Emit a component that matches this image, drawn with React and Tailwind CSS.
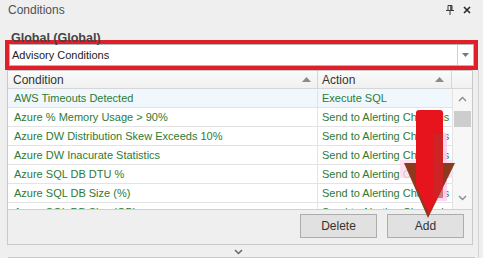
import React from "react";

const rows = [
  ["AWS Timeouts Detected", "Execute SQL"],
  ["Azure % Memory Usage > 90%", "Send to Alerting Channels"],
  ["Azure DW Distribution Skew Exceeds 10%", "Send to Alerting Channels"],
  ["Azure DW Inacurate Statistics", "Send to Alerting Channels"],
  ["Azure SQL DB DTU %", "Send to Alerting Channels"],
  ["Azure SQL DB Size (%)", "Send to Alerting Channels"],
  ["Azure SQL DB Size (GB)", "Send to Alerting Channels"],
];

function SortUp() {
  return (
    <svg width="9" height="5" viewBox="0 0 9 5">
      <path d="M0 5 L4.5 0 L9 5 Z" fill="#8a8a8a" />
    </svg>
  );
}

export default function App() {
  return (
    <div
      className="relative w-[483px] h-[258px] overflow-hidden bg-[#efefef] text-[#333]"
      style={{ fontFamily: '"Liberation Sans", Arial, sans-serif' }}
    >
      {/* title bar */}
      <div className="h-[19px] flex items-center justify-between pl-[8px] pr-[12px]">
        <span className="text-[12px] leading-[14px] text-[#505050]">Conditions</span>
        <div className="flex items-center gap-[9px]">
          <svg width="8" height="10" viewBox="0 0 8 10">
            <path d="M2 0.5 H6 V5 M2 0.5 V5" stroke="#3a3a3a" strokeWidth="1" fill="none" />
            <path d="M5 0.5 V5" stroke="#3a3a3a" strokeWidth="1.5" />
            <path d="M0 5.5 H8" stroke="#3a3a3a" strokeWidth="1" />
            <path d="M4 5.5 V10" stroke="#3a3a3a" strokeWidth="1" />
          </svg>
          <svg width="8" height="8" viewBox="0 0 8 8">
            <path d="M1 1 L7 7 M7 1 L1 7" stroke="#2a2a2a" strokeWidth="1.6" />
          </svg>
        </div>
      </div>

      {/* heading */}
      <div className="h-[21px] pl-[11px] pt-[6px]">
        <span className="text-[12.5px] leading-[15px] font-bold text-[#444]">Global (Global)</span>
      </div>

      {/* red highlighted dropdown */}
      <div className="ml-[5px] w-[473px] h-[30px] border-4 border-[#e11f2b] bg-white">
        <div className="flex h-full border border-[#b5b5b5]">
          <div className="flex-1 flex items-center pl-[2px] text-[11px] text-[#222]">
            Advisory Conditions
          </div>
          <div className="w-[16px] border-l border-[#cfcfcf] flex items-center justify-center">
            <svg width="7" height="4" viewBox="0 0 7 4">
              <path d="M0 0 H7 L3.5 4 Z" fill="#777" />
            </svg>
          </div>
        </div>
      </div>

      {/* lower section */}
      <div className="w-[479px] h-[188px] border-r border-[#d2d2d2]">
        <div className="ml-[7px] w-[466px] h-[175px] border border-[#c9c9c9] flex flex-col">
          {/* header */}
          <div className="flex h-[18px] border-b border-[#d6d6d6] bg-gradient-to-b from-[#fafafa] to-[#f0f0f0] text-[12px]">
            <div className="w-[310px] border-r border-[#d6d6d6] flex items-center justify-between pl-[5px] pr-[6px]">
              <span className="text-[#333]">Condition</span>
              <SortUp />
            </div>
            <div className="w-[134px] border-r border-[#d6d6d6] flex items-center justify-between pl-[4px] pr-[7px]">
              <span className="text-[#333]">Action</span>
              <SortUp />
            </div>
            <div className="w-[20px]" />
          </div>
          {/* body */}
          <div className="flex h-[121px] border-b border-[#d0d0d0] bg-white overflow-hidden">
            <div className="w-[444px]">
              {rows.map((r, i) => (
                <div
                  key={i}
                  className={
                    i === 0
                      ? "flex h-[19px] border-b border-[#e3e3e3] bg-[#f0f7fd] text-[11px] text-[#2e7a34]"
                      : "flex h-[19px] border-b border-[#e3e3e3] text-[11px] text-[#2e7a34]"
                  }
                >
                  <div className="w-[310px] border-r border-[#e3e3e3] flex items-center pl-[6px] whitespace-nowrap">
                    {r[0]}
                  </div>
                  <div className="w-[134px] flex items-center pl-[4px] whitespace-nowrap overflow-hidden">
                    {r[1]}
                  </div>
                </div>
              ))}
            </div>
            <div className="w-[20px] border-l border-[#e3e3e3] bg-[#f7f7f7] flex flex-col items-center">
              <div className="h-[19px] flex items-center justify-center">
                <svg width="9" height="6" viewBox="0 0 9 6">
                  <path d="M1 5 L4.5 1.5 L8 5" stroke="#8a8a8a" strokeWidth="1.4" fill="none" />
                </svg>
              </div>
              <div className="w-[17px] h-[16px] mt-[3px] bg-[#cdcdcd]" />
              <div className="flex-1" />
              <div className="h-[19px] flex items-center justify-center mb-[2px]">
                <svg width="9" height="6" viewBox="0 0 9 6">
                  <path d="M1 1 L4.5 4.5 L8 1" stroke="#8a8a8a" strokeWidth="1.4" fill="none" />
                </svg>
              </div>
            </div>
          </div>
          {/* buttons */}
          <div className="flex justify-end gap-[10px] pt-[4px] pr-[8px]">
            <button className="w-[77px] h-[24px] bg-[#e1e1e1] border border-[#adadad] text-[12px] text-[#333]">
              Delete
            </button>
            <button className="w-[77px] h-[24px] bg-[#e1e1e1] border border-[#adadad] text-[12px] text-[#333]">
              Add
            </button>
          </div>
        </div>
        <div className="h-[12px] flex items-center justify-center pr-[1px] pt-[1px]">
          <svg width="9" height="6" viewBox="0 0 9 6">
            <path d="M1 1 L4.5 4.5 L8 1" stroke="#666" strokeWidth="1.5" fill="none" />
          </svg>
        </div>
        <div className="ml-[8px] w-[467px] h-[1px] bg-[#c9c9c9]" />
      </div>

      {/* red arrow annotation */}
      <svg
        className="absolute left-0 top-0 pointer-events-none"
        width="483"
        height="258"
        viewBox="0 0 483 258"
      >
        <rect x="432" y="133" width="15" height="68" fill="#ffcdf0" opacity="0.85" />
        <rect x="400" y="160" width="52" height="18" fill="#ffd9ee" opacity="0.8" />
        <polygon points="404,163 455,163 428,218" fill="#8b3a1d" />
        <path d="M416 113 Q416 110 419 110 H440 Q443 110 443 113 V186 L429 214 L416 186 Z" fill="#e8141d" />
        <rect x="433" y="134" width="10" height="64" fill="#b8302c" opacity="0.55" />
      </svg>
    </div>
  );
}
